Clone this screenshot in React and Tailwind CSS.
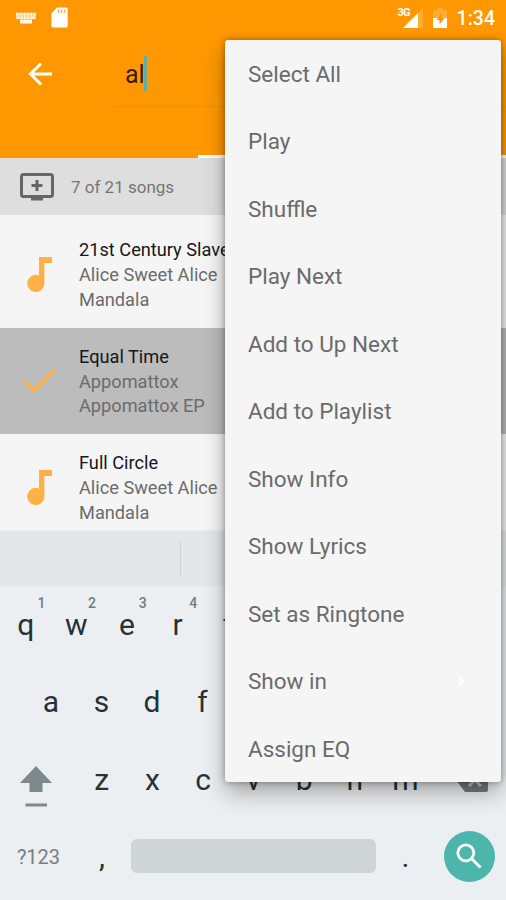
const songs = [
    { title: '21st Century Slave', artist: 'Alice Sweet Alice', album: 'Mandala' },
    { title: 'Equal Time', artist: 'Appomattox', album: 'Appomattox EP', selected: true },
    { title: 'Full Circle', artist: 'Alice Sweet Alice', album: 'Mandala' },
];

const menuItems = [
    'Select All',
    'Play',
    'Shuffle',
    'Play Next',
    'Add to Up Next',
    'Add to Playlist',
    'Show Info',
    'Show Lyrics',
    'Set as Ringtone',
    'Show in',
    'Assign EQ',
];

const hints = ['1', '2', '3', '4'];

function StatusBar() {
    return (
        <div className="flex h-[34px] items-center justify-between pl-4 pr-[11px] pt-[2px] text-white">
            <div className="flex items-center gap-[15px]">
                <svg className="h-3 w-5" viewBox="0 0 20 12" fill="currentColor" opacity="0.9">
                    <path d="M0 .5h20v6.800h-4v4H4v-4H0z" opacity="0.55" />
                    <path d="M0 1h3v2.6H0zM4 1h2.4v2.6H4zM7.4 1h2.2v2.6H7.4zM10.6 1h2.2v2.6h-2.2zM13.8 1H16v2.6h-2.2zM17 1h3v2.6h-3zM.5 4.4h3V7h-3zM4.5 4.4H7V7H4.5zM8 4.4h2.2V7H8zM11.2 4.4h2.2V7h-2.2zM14.4 4.4h5V7h-5zM4 8h12v3.5H4z" />
                </svg>
                <svg className="-mt-[2px] h-[21px] w-[17px]" viewBox="0 0 17 21">
                    <path d="M6.2.5h9A1.5 1.5 0 0 1 16.7 2v17a1.5 1.5 0 0 1-1.5 1.5H2A1.5 1.5 0 0 1 .5 19V6.2z" fill="white" />
                    <path d="M7.500 2.500v3.500M10.500 2.500v3.500M13.500 2.500v3.500" stroke="#ff9800" strokeWidth="1.5" opacity="0.75" />
                </svg>
            </div>
            <div className="flex items-center">
                <div className="relative -mt-px h-[22px] w-[26px]">
                    <span className="absolute left-0 top-0 text-[11px] leading-[12px] font-bold tracking-[-0.8px]">3G</span>
                    <svg className="h-full w-full" viewBox="0 0 26 22" fill="currentColor">
                        <path d="M20 6.500 25 1v20h-5z" opacity="0.2" />
                        <path d="M5 21 20 6v15z" />
                    </svg>
                </div>
                <svg className="ml-[9px] h-5 w-[14px]" viewBox="0 0 14 20">
                    <path d="M4 0h6v2h3a1 1 0 0 1 1 1v7H0V3a1 1 0 0 1 1-1h3z" fill="white" opacity="0.2" />
                    <path d="M0 10h14v9a1 1 0 0 1-1 1H1a1 1 0 0 1-1-1z" fill="white" />
                    <path d="M8.500 5 3.500 12h3v4.500l5-6.500h-3z" fill="#ff9800" />
                </svg>
                <span className="ml-[10px] pt-[2px] text-[19.500px] leading-none font-medium">1:34</span>
            </div>
        </div>
    );
}

function Header() {
    return (
        <header className="flex h-[158px] flex-col bg-[#ff9800]">
            <StatusBar />
            <div className="flex h-[79px] items-center pl-[28px]">
                <svg className="h-6 w-6" viewBox="0 0 24 24" fill="none" stroke="white" strokeWidth="3">
                    <path d="M24 12H3M13 1.500 2.500 12 13 22.500" />
                </svg>
                <div className="ml-[61px] flex h-[67px] flex-1 items-center border-b border-[#ef9106] pl-[12px]">
                    <span className="pt-[2px] text-[25px] leading-none text-[#331f00]">al</span>
                    <span className="-ml-px h-[35px] w-[3px] bg-[#62aea0]" />
                </div>
            </div>
            <div className="mt-auto ml-[198px] h-[3px] bg-white" />
        </header>
    );
}

function SongIcon({ selected }) {
    if (selected) {
        return (
            <svg className="h-[26px] w-[33px]" viewBox="0 0 33 26" fill="none" stroke="#ffb041" strokeWidth="3.4">
                <path d="M1.200 13.300 11 22.500 31.800 1.600" />
            </svg>
        );
    }
    return (
        <svg className="h-[35px] w-[25px]" viewBox="0 0 25 35" fill="#ffb145">
            <path d="M12 0h13v6h-7.600v20.500A8.600 8.600 0 1 1 12 18.500z" />
        </svg>
    );
}

function SongRow({ song }) {
    return (
        <div className={`flex h-[106.700px] shrink-0 items-center ${song.selected ? 'bg-[#bcbcbc]' : 'bg-[#f5f5f5]'}`}>
            <div className="flex w-[79px] shrink-0 justify-center">
                <SongIcon selected={song.selected} />
            </div>
            <div className="pt-[2px] text-[18.200px] leading-[24.900px] whitespace-nowrap text-[#6b6b6b]">
                <p className="text-[#161616]">{song.title}</p>
                <p>{song.artist}</p>
                <p>{song.album}</p>
            </div>
        </div>
    );
}

function Key({ label, hint }) {
    return (
        <div className="relative flex w-[50.600px] items-center justify-center">
            {label}
            {hint && <span className="absolute top-[10px] left-[37px] text-[14px] leading-none font-medium text-[#6e7b80]">{hint}</span>}
        </div>
    );
}

// The menu covers the right side of the top two rows, so they stop at its edge.
function Keyboard() {
    return (
        <div className="flex flex-1 flex-col bg-[#eceff1]">
            <div className="flex h-[55px] items-center bg-[#e4e7e9]">
                <div className="ml-[180px] h-[34px] w-px bg-[#cfd3d5]" />
            </div>
            <div className="pl-[0.500px] text-[30px] leading-none text-[#263238]">
                <div className="flex h-[77px]">
                    {'qwert'.split('').map((c, i) => <Key key={c} label={c} hint={hints[i]} />)}
                </div>
                <div className="flex h-[78px] pl-[25px]">
                    {'asdf'.split('').map((c) => <Key key={c} label={c} />)}
                </div>
                <div className="flex h-[77px] items-stretch">
                    <div className="flex w-[76px] justify-center pr-[5px]">
                        <svg className="mt-[25px] h-[42px] w-8" viewBox="0 0 32 42" fill="#7e898c">
                            <path d="M16 0 32 17H22.500v9h-13v-9H0zM5.500 37.500h21.500v3H5.500z" />
                        </svg>
                    </div>
                    {'zxcvbnm'.split('').map((c) => <Key key={c} label={c} />)}
                    <div className="flex flex-1 items-center justify-center pl-[7px]">
                        <svg className="h-6 w-8" viewBox="0 0 32 24">
                            <path d="M9 0h21a2 2 0 0 1 2 2v20a2 2 0 0 1-2 2H9L0 12z" fill="#707a7e" />
                            <path d="m13 6 12 12M25 6 13 18" stroke="#c5c9cb" strokeWidth="3" />
                        </svg>
                    </div>
                </div>
                <div className="flex h-[76px] items-center">
                    <span className="w-[76px] pt-px text-center text-[20px] text-[#757f83]">?123</span>
                    <span className="w-[51px] pt-px text-center">,</span>
                    <div className="ml-[3.500px] h-[34px] w-[245px] rounded-md bg-[#cfd4d6]" />
                    <span className="ml-1 w-[51px] pt-px text-center">.</span>
                    <div className="ml-[12.500px] flex size-[51px] items-center justify-center rounded-full bg-[#4db6ac]">
                        <svg className="size-[26px]" viewBox="0 0 26 26" fill="none" stroke="white" strokeWidth="2.800">
                            <circle cx="9.800" cy="9.800" r="8" />
                            <path d="m15.500 15.500 9 9" />
                        </svg>
                    </div>
                </div>
            </div>
        </div>
    );
}

function ContextMenu() {
    return (
        <ul className="absolute top-[39.500px] left-[225px] w-[276px] rounded-[3px] bg-[#f5f5f5] shadow-[0_11px_22px_rgba(0,0,0,0.3),0_0_6px_rgba(0,0,0,0.35)]">
            {menuItems.map((item) => (
                <li key={item} className="flex h-[67.500px] items-center justify-between pt-[3px] pr-[36px] pl-[23px] text-[22.500px] text-[#6b6b6b]">
                    {item}
                    {item === 'Show in' && (
                        <svg className="-mt-[3px] h-3 w-[6px]" viewBox="0 0 6 12" fill="white">
                            <path d="M0 0 6 6 0 12z" />
                        </svg>
                    )}
                </li>
            ))}
        </ul>
    );
}

export default function App() {
    return (
        <div className="relative flex h-[900px] w-[506px] flex-col overflow-hidden bg-[#f5f5f5] font-[Roboto,sans-serif]">
            <Header />
            <div className="flex h-[57px] items-center bg-[#dedede] pl-5">
                <svg className="h-7 w-[34px]" viewBox="0 0 34 28" fill="none" stroke="#666" strokeWidth="3">
                    <rect x="1.500" y="1.500" width="31" height="22" rx="2" />
                    <path d="M11 26h12M17 7v11M11.500 12.500h11" />
                </svg>
                <span className="ml-[17px] pt-[2px] text-[17px] text-[#757575]">7 of 21 songs</span>
            </div>
            <div className="flex h-[316px] flex-col overflow-hidden border-b-2 border-[#f0f1f1] pt-[6px]">
                {songs.map((song) => <SongRow key={song.title} song={song} />)}
            </div>
            <Keyboard />
            <ContextMenu />
        </div>
    );
}
